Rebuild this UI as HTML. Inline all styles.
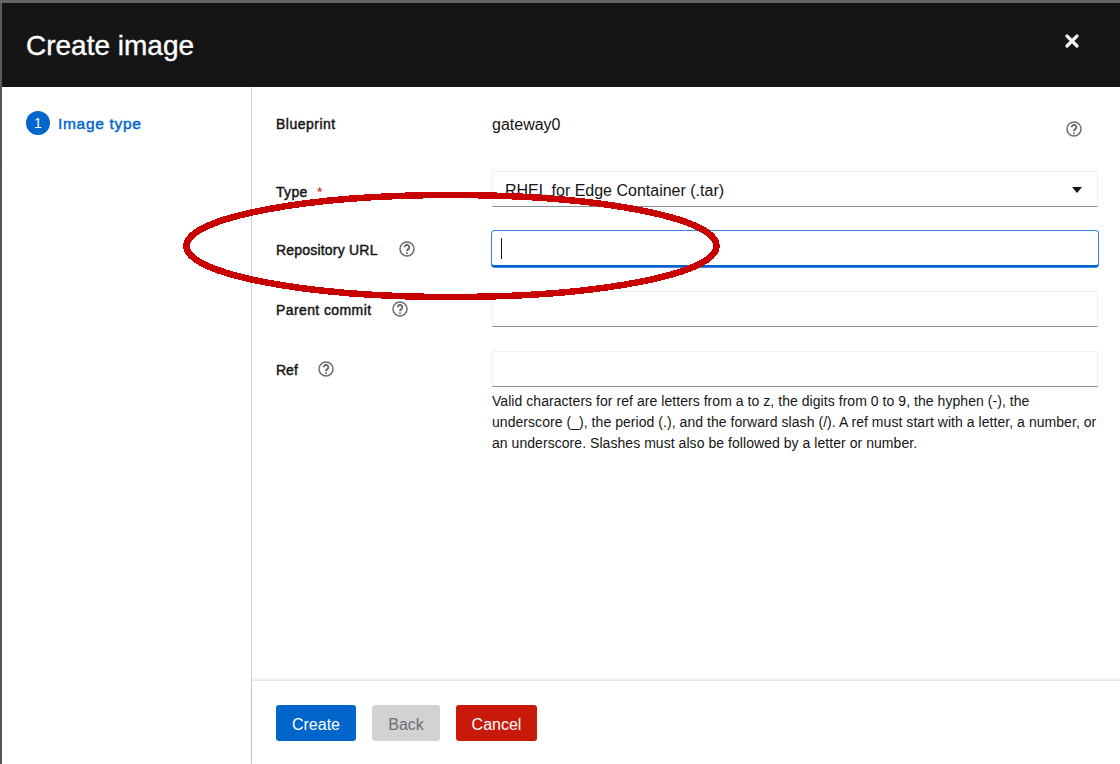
<!DOCTYPE html>
<html>
<head>
<meta charset="utf-8">
<style>
html,body{margin:0;padding:0;width:1120px;height:764px;overflow:hidden;background:#5a5a5a;font-family:"Liberation Sans",sans-serif;}
.abs{position:absolute;white-space:nowrap;}
#modal{position:absolute;left:2px;top:3px;width:1118px;height:761px;background:#fff;overflow:hidden;}
#header{position:absolute;left:0;top:0;width:1118px;height:84px;background:#151515;}
#title{left:24px;top:25px;font-size:28px;line-height:36px;color:#fff;-webkit-text-stroke:0.35px #fff;}
#nav{position:absolute;left:0;top:84px;width:249px;height:677px;border-right:1px solid #d2d2d2;}
.lbl{font-size:14px;font-weight:400;-webkit-text-stroke:0.45px #151515;color:#151515;line-height:20px;}
.txt{font-size:16px;color:#151515;line-height:24px;}
.inp{position:absolute;left:490px;width:604px;height:34px;border:1px solid #f0f0f0;border-bottom-color:#8a8d90;background:#fff;}
.help{position:absolute;width:16px;height:16px;}
.btn{position:absolute;top:702px;height:36px;border-radius:3px;font-size:16px;line-height:39px;text-align:center;}
#footer{position:absolute;left:250px;top:678px;width:868px;height:84px;background:#fff;box-shadow:0 -1px 3px rgba(3,3,3,0.16);}
</style>
</head>
<body>
<div class="abs" style="left:0;top:0;width:1120px;height:3px;background:#636363;"></div>
<div class="abs" style="left:1px;top:3px;width:1px;height:84px;background:#5e5e5e;"></div>
<div class="abs" style="left:1px;top:87px;width:1px;height:677px;background:#4e4e4e;"></div>
<div class="abs" style="left:0;top:163px;width:2px;height:1px;background:#404040;"></div>
<div id="modal">
  <div id="header">
    <div id="title" class="abs">Create image</div>
    <svg class="abs" style="left:1063px;top:31px" width="14" height="14" viewBox="0 0 14 14"><path d="M2 2 L12 12 M12 2 L2 12" stroke="#f0f0f0" stroke-width="3.2" stroke-linecap="round"/></svg>
  </div>
  <div id="nav">
    <div class="abs" style="left:24px;top:24px;width:24px;height:24px;border-radius:50%;background:#0066cc;color:#fff;font-size:14px;line-height:24px;text-align:center;">1</div>
    <div class="abs" style="left:56px;top:25px;font-size:15.5px;font-weight:400;-webkit-text-stroke:0.45px #0066cc;letter-spacing:0.7px;color:#0066cc;line-height:24px;">Image type</div>
  </div>

  <!-- Blueprint -->
  <div class="abs lbl" style="left:274px;top:111px;letter-spacing:0.5px;">Blueprint</div>
  <div class="abs txt" style="left:490px;top:109.5px;">gateway0</div>
  <svg class="help" style="left:1064px;top:118px" viewBox="0 0 16 16"><circle cx="8" cy="8" r="7" fill="none" stroke="#6a6e73" stroke-width="1.5"/><path d="M5.7 6.3 A2.3 2.3 0 1 1 9.3 8.1 C8.4 8.7 8 9 8 10.3" fill="none" stroke="#6a6e73" stroke-width="2"/><circle cx="8" cy="12.3" r="1" fill="#6a6e73"/></svg>

  <!-- Type -->
  <div class="abs lbl" style="left:274px;top:179px;letter-spacing:0.3px;">Type</div>
  <div class="abs" style="left:315px;top:179px;font-size:14px;color:#c9190b;line-height:20px;">*</div>
  <div class="inp" style="top:168px;"></div>
  <div class="abs txt" style="left:503px;top:176px;">RHEL for Edge Container (.tar)</div>
  <svg class="abs" style="left:1070px;top:183.5px" width="10" height="6" viewBox="0 0 10 6"><path d="M0 0 L10 0 L5 6 Z" fill="#151515"/></svg>

  <!-- Repository URL -->
  <div class="abs lbl" style="left:274px;top:237px;letter-spacing:0.2px;">Repository URL</div>
  <svg class="help" style="left:397px;top:238px" viewBox="0 0 16 16"><circle cx="8" cy="8" r="7" fill="none" stroke="#6a6e73" stroke-width="1.5"/><path d="M5.7 6.3 A2.3 2.3 0 1 1 9.3 8.1 C8.4 8.7 8 9 8 10.3" fill="none" stroke="#6a6e73" stroke-width="2"/><circle cx="8" cy="12.3" r="1" fill="#6a6e73"/></svg>
  <div class="abs" style="left:489px;top:227px;width:606px;height:34px;border:1px solid #3584e0;border-bottom:2px solid #0062c9;border-radius:4px;box-shadow:0 1px 0 #3a86e2;background:#fff;"></div>
  <div class="abs" style="left:499px;top:235px;width:1px;height:21px;background:#151515;"></div>

  <!-- Parent commit -->
  <div class="abs lbl" style="left:274px;top:297px;letter-spacing:0.4px;">Parent commit</div>
  <svg class="help" style="left:390px;top:298px" viewBox="0 0 16 16"><circle cx="8" cy="8" r="7" fill="none" stroke="#6a6e73" stroke-width="1.5"/><path d="M5.7 6.3 A2.3 2.3 0 1 1 9.3 8.1 C8.4 8.7 8 9 8 10.3" fill="none" stroke="#6a6e73" stroke-width="2"/><circle cx="8" cy="12.3" r="1" fill="#6a6e73"/></svg>
  <div class="inp" style="top:288px;"></div>

  <!-- Ref -->
  <div class="abs lbl" style="left:274px;top:357px;letter-spacing:0px;">Ref</div>
  <svg class="help" style="left:316px;top:358px" viewBox="0 0 16 16"><circle cx="8" cy="8" r="7" fill="none" stroke="#6a6e73" stroke-width="1.5"/><path d="M5.7 6.3 A2.3 2.3 0 1 1 9.3 8.1 C8.4 8.7 8 9 8 10.3" fill="none" stroke="#6a6e73" stroke-width="2"/><circle cx="8" cy="12.3" r="1" fill="#6a6e73"/></svg>
  <div class="inp" style="top:348px;"></div>
  <div class="abs" style="left:490px;top:388px;font-size:14px;line-height:21px;letter-spacing:0.05px;color:#151515;">Valid characters for ref are letters from a to z, the digits from 0 to 9, the hyphen (-), the<br>underscore (_), the period (.), and the forward slash (/). A ref must start with a letter, a number, or<br>an underscore. Slashes must also be followed by a letter or number.</div>

  <div id="footer"></div>
  <div class="btn" style="left:274px;width:80px;background:#0066cc;color:#fff;">Create</div>
  <div class="btn" style="left:370px;width:68px;background:#d2d2d2;color:#6a6e73;">Back</div>
  <div class="btn" style="left:454px;width:81px;background:#c9190b;color:#fff;">Cancel</div>
</div>
<svg class="abs" style="left:0;top:0" width="1120" height="764" viewBox="0 0 1120 764"><ellipse cx="451.5" cy="246" rx="265" ry="51" fill="none" stroke="#c80000" stroke-width="6.5" shape-rendering="crispEdges"/></svg>
</body>
</html>
